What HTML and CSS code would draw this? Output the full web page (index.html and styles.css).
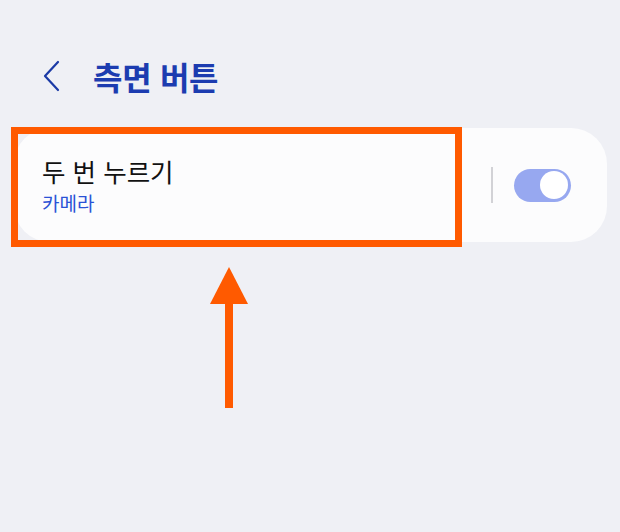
FILE: index.html
```html
<!DOCTYPE html>
<html lang="ko">
<head>
<meta charset="utf-8">
<link rel="stylesheet" href="styles.css">
</head>
<body>
<div class="page">
  <header class="header">
    <svg class="back" width="20" height="32" viewBox="0 0 20 32">
      <polyline points="16,2 3,16 16,30" fill="none" stroke="#1b3aa6" stroke-width="2.2" stroke-linecap="round" stroke-linejoin="round"/>
    </svg>
    <h1 class="title">측면 버튼</h1>
  </header>
  <div class="card-wrap">
    <div class="card">
      <div class="card-text">
        <div class="label">두 번 누르기</div>
        <div class="sub">카메라</div>
      </div>
      <div class="divider"></div>
      <div class="toggle"><div class="knob"></div></div>
    </div>
    <div class="highlight"></div>
  </div>
  <div class="arrow">
    <div class="arrow-head"></div>
    <div class="arrow-shaft"></div>
  </div>
</div>
</body>
</html>
```
FILE: styles.css
```css
html, body {
  margin: 0;
  padding: 0;
  background: #eff0f5;
}
body {
  width: 620px;
  height: 532px;
  overflow: hidden;
  font-family: "Noto Sans CJK KR", "Noto Sans", sans-serif;
}
.page {
  display: flex;
  flex-direction: column;
}
.header {
  display: flex;
  align-items: center;
  height: 40px;
  margin-top: 56px;
  padding-left: 42px;
}
.back {
  display: block;
}
.title {
  margin: 0 0 0 31px;
  font-size: 32px;
  font-weight: 700;
  color: #1c3cb0;
  letter-spacing: -0.3px;
  line-height: 40px;
}
.card-wrap {
  position: relative;
  margin-top: 32px;
  margin-left: 14px;
  width: 593px;
}
.card {
  display: flex;
  align-items: center;
  height: 114px;
  background: #fcfcfd;
  border-radius: 36px;
  box-sizing: border-box;
  padding-left: 28px;
}
.card-text {
  flex: 1;
  display: flex;
  flex-direction: column;
}
.label {
  font-size: 25.5px;
  color: #111;
  line-height: 30px;
}
.sub {
  margin-top: 6px;
  font-size: 19px;
  color: #2a52d6;
  line-height: 22px;
}
.divider {
  width: 2px;
  height: 36px;
  background: #d2d2d6;
  margin-right: 21px;
}
.toggle {
  width: 57px;
  height: 33px;
  border-radius: 17px;
  background: #97a8f0;
  margin-right: 36px;
  position: relative;
}
.knob {
  position: absolute;
  right: 3px;
  top: 2.5px;
  width: 28px;
  height: 28px;
  border-radius: 50%;
  background: #fff;
}
.highlight {
  position: absolute;
  left: -3px;
  top: -1px;
  width: 437px;
  height: 106px;
  border: 7px solid #ff5a00;
}
.arrow {
  display: flex;
  flex-direction: column;
  align-items: center;
  width: 38px;
  margin-left: 210px;
  margin-top: 25px;
}
.arrow-head {
  width: 0;
  height: 0;
  border-left: 19px solid transparent;
  border-right: 19px solid transparent;
  border-bottom: 37px solid #ff5a00;
}
.arrow-shaft {
  width: 8px;
  height: 104px;
  background: #ff5a00;
}
```
